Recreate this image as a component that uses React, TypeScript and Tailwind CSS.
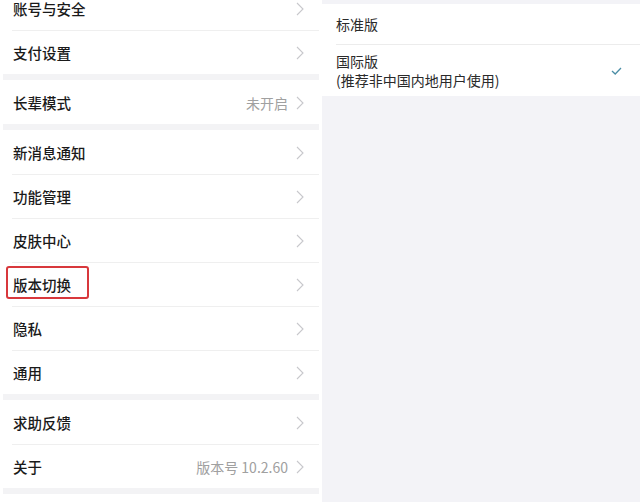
import React from "react";

type Row = { label: string; value?: string };

const groups: Row[][] = [
  [{ label: "账号与安全" }, { label: "支付设置" }],
  [{ label: "长辈模式", value: "未开启" }],
  [
    { label: "新消息通知" },
    { label: "功能管理" },
    { label: "皮肤中心" },
    { label: "版本切换" },
    { label: "隐私" },
    { label: "通用" },
  ],
  [{ label: "求助反馈" }, { label: "关于", value: "版本号 10.2.60" }],
];

function Chevron() {
  return (
    <svg width="8" height="14" viewBox="0 0 8 14" fill="none" className="shrink-0">
      <path d="M1 1l6 6-6 6" stroke="#c8c8cc" strokeWidth="1.1" />
    </svg>
  );
}

function SettingRow({ row, first }: { row: Row; first: boolean }) {
  const highlighted = row.label === "版本切换";
  return (
    <div className="relative flex h-[44px] items-center pl-[10px] pr-[15px] pt-[2px]">
      {!first && <div className="absolute left-[9px] right-0 top-0 h-px bg-[#efefef]" />}
      <span className="flex-1 text-[14.5px] font-medium text-[#1a1a1a]">{row.label}</span>
      {highlighted && (
        <div className="absolute left-[3px] top-[4px] h-[33px] w-[83px] rounded-[3px] border-2 border-[#d8383c]" />
      )}
      {row.value && <span className="mr-[8px] text-[14px] text-[#a0a0a0]">{row.value}</span>}
      <Chevron />
    </div>
  );
}

export default function App() {
  return (
    <div
      className="flex h-[504px] w-[640px] bg-white"
      style={{ fontFamily: '"Noto Sans CJK SC", "Noto Sans", sans-serif' }}
    >
      <div className="ml-[3px] mt-[-14px] flex h-[509px] w-[316px] flex-col bg-white">
        {groups.map((g, gi) => (
          <div key={gi} className="bg-white">
            {g.map((r, ri) => (
              <SettingRow key={r.label} row={r} first={ri === 0} />
            ))}
            <div className="h-[6px] bg-[#f3f3f5]" />
          </div>
        ))}
      </div>
      <div className="ml-[3px] flex h-[502px] flex-1 flex-col bg-[#f3f3f7]">
        <div className="mt-[4px] bg-white">
          <div className="flex h-[40px] items-center pl-[14px] text-[14px] text-[#2a2a2a]">标准版</div>
          <div className="ml-[14px] h-px bg-[#ececec]" />
          <div className="flex h-[51px] items-center pl-[14px] pr-[18px]">
            <div className="flex-1 text-[14px] leading-[19px] text-[#2a2a2a]">
              <div>国际版</div>
              <div>(推荐非中国内地用户使用)</div>
            </div>
            <svg width="11" height="8" viewBox="0 0 11 8" fill="none">
              <path d="M1 4l3.2 3L10 1" stroke="#4b8ea6" strokeWidth="1.3" />
            </svg>
          </div>
        </div>
      </div>
    </div>
  );
}
